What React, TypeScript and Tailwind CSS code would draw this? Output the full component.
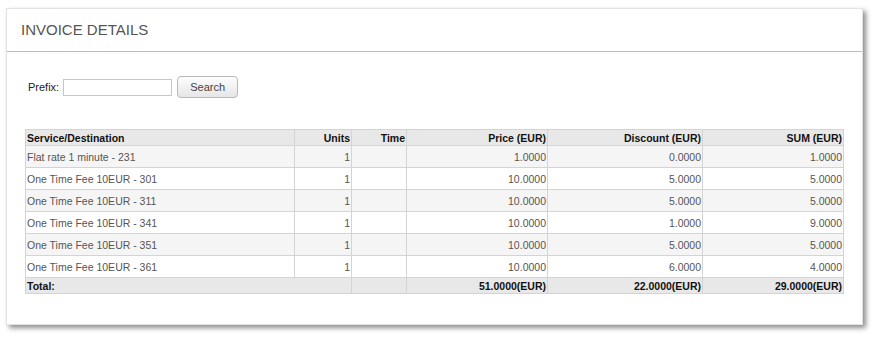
const rows = [
  { name: "Flat rate 1 minute - 231", units: 1, price: "1.0000", discount: "0.0000", sum: "1.0000" },
  { name: "One Time Fee 10EUR - 301", units: 1, price: "10.0000", discount: "5.0000", sum: "5.0000" },
  { name: "One Time Fee 10EUR - 311", units: 1, price: "10.0000", discount: "5.0000", sum: "5.0000" },
  { name: "One Time Fee 10EUR - 341", units: 1, price: "10.0000", discount: "1.0000", sum: "9.0000" },
  { name: "One Time Fee 10EUR - 351", units: 1, price: "10.0000", discount: "5.0000", sum: "5.0000" },
  { name: "One Time Fee 10EUR - 361", units: 1, price: "10.0000", discount: "6.0000", sum: "4.0000" },
];

const cell = "border border-[#d4d4d4] px-[1px] leading-[14px]";

export default function App() {
  return (
    <div className="h-[337px] w-[875px] bg-white pl-[6px] pt-[8px] font-['Liberation_Sans',Arial,sans-serif]">
      <div className="h-[317px] w-[857px] border border-[#e2e2e2] bg-white shadow-[3px_3px_5px_rgba(0,0,0,0.45)]">
        <div className="flex h-[43px] items-center border-b border-[#bdbdbd] pl-[14px]">
          <h1 className="pt-[1px] text-[15px] uppercase text-[#555]">Invoice Details</h1>
        </div>

        <div className="flex items-center pl-[21px] pt-[24px] text-[11px] text-[#222]">
          <label className="mr-[4px]">Prefix:</label>
          <input className="h-[17px] w-[109px] border border-[#c8c8c8] bg-white" type="text" />
          <button
            className="ml-[5px] h-[22px] w-[61px] rounded-[4px] border border-[#b8b8b8] bg-gradient-to-b from-[#fdfdfd] to-[#e6e6e6] text-[11px] text-[#444]"
            type="button"
          >
            Search
          </button>
        </div>

        <table className="ml-[18px] mt-[31px] w-[818px] table-fixed border-collapse text-[10.5px]">
          <colgroup>
            <col className="w-[269px]" />
            <col className="w-[57px]" />
            <col className="w-[55px]" />
            <col className="w-[141px]" />
            <col className="w-[155px]" />
            <col className="w-[141px]" />
          </colgroup>
          <thead>
            <tr className="h-[16px] bg-[#e8e8e8] font-bold text-[#111]">
              <th className={`${cell} text-left`}>Service/Destination</th>
              <th className={`${cell} text-right`}>Units</th>
              <th className={`${cell} text-right`}>Time</th>
              <th className={`${cell} text-right`}>Price (EUR)</th>
              <th className={`${cell} text-right`}>Discount (EUR)</th>
              <th className={`${cell} text-right`}>SUM (EUR)</th>
            </tr>
          </thead>
          <tbody className="text-[#555]">
            {rows.map((r, i) => (
              <tr key={r.name} className={`h-[22px] ${i % 2 === 0 ? "bg-[#f5f5f5]" : "bg-white"}`}>
                <td className={`${cell} text-left`}>{r.name}</td>
                <td className={`${cell} text-right`}>{r.units}</td>
                <td className={cell}></td>
                <td className={`${cell} text-right`}>{r.price}</td>
                <td className={`${cell} text-right`}>{r.discount}</td>
                <td className={`${cell} text-right`}>{r.sum}</td>
              </tr>
            ))}
            <tr className="h-[16px] bg-[#e8e8e8] font-bold text-[#111]">
              <td className={`${cell} text-left`} colSpan={2}>Total:</td>
              <td className={cell}></td>
              <td className={`${cell} text-right`}>51.0000(EUR)</td>
              <td className={`${cell} text-right`}>22.0000(EUR)</td>
              <td className={`${cell} text-right`}>29.0000(EUR)</td>
            </tr>
          </tbody>
        </table>
      </div>
    </div>
  );
}
